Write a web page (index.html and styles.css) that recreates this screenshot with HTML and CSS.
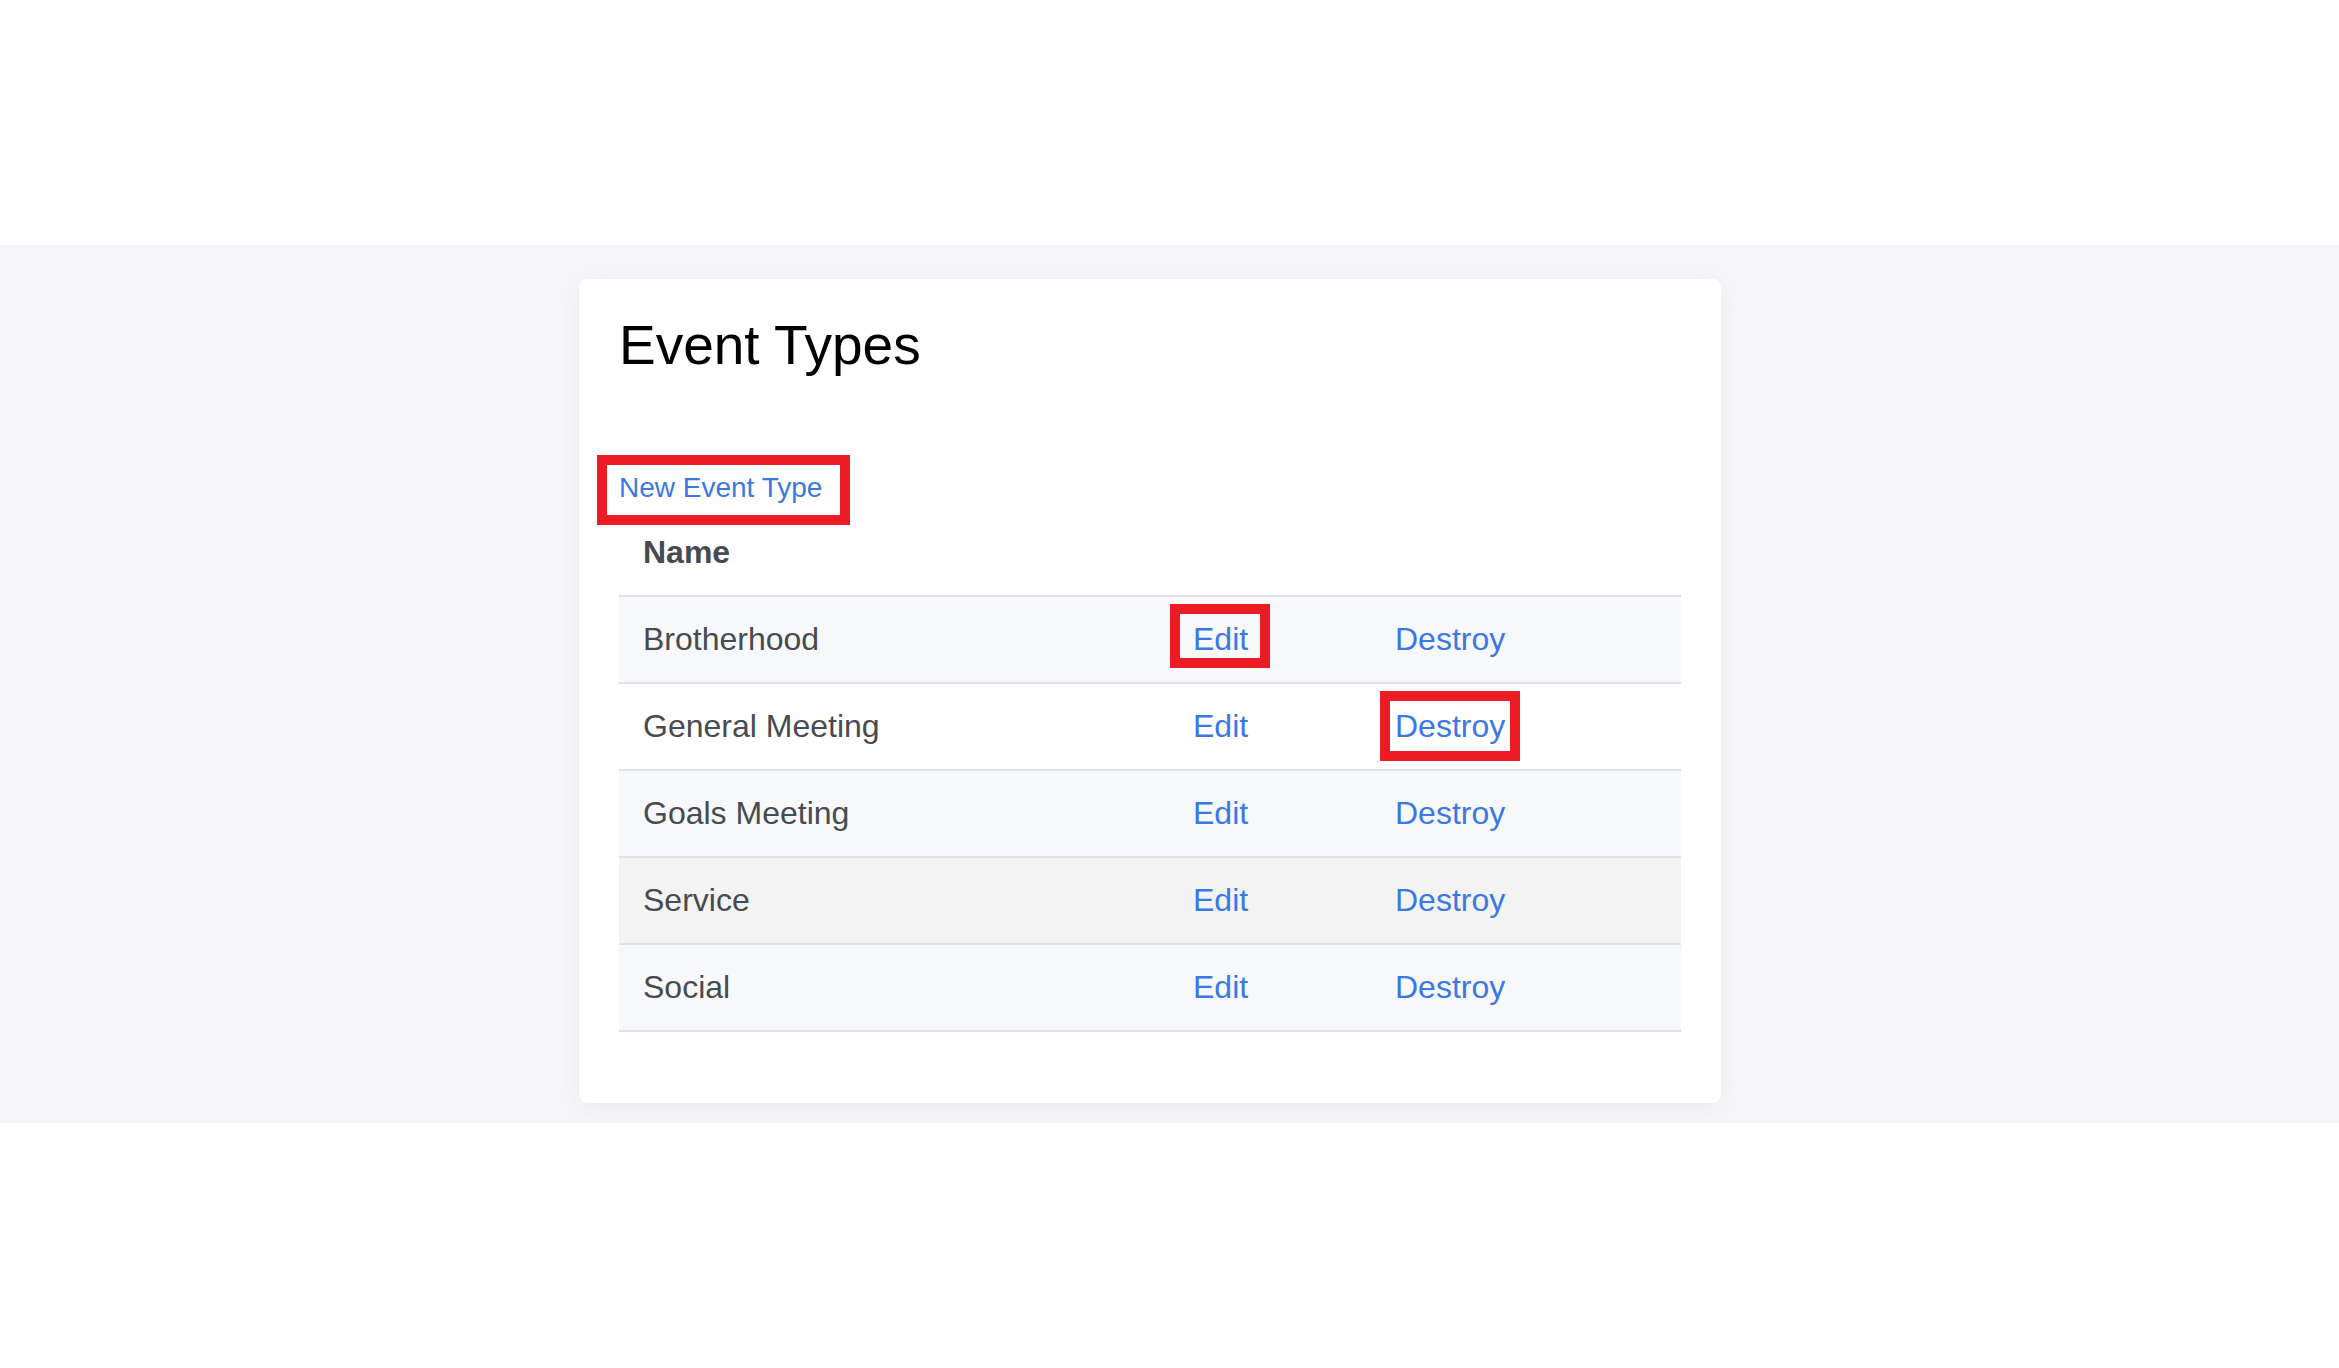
FILE: index.html
```html
<!DOCTYPE html>
<html lang="en">
<head>
<meta charset="utf-8">
<title>Event Types</title>
<link rel="stylesheet" href="styles.css">
</head>
<body>
<div class="topbar"></div>
<main class="band">
  <div class="container">
    <section class="card">
      <h1 class="title">Event Types</h1>
      <p class="new-line"><a class="link hl hl-new" href="#">New Event Type</a></p>
      <table class="table">
        <colgroup>
          <col class="col-name">
          <col class="col-edit">
          <col class="col-destroy">
        </colgroup>
        <thead>
          <tr><th>Name</th><th></th><th></th></tr>
        </thead>
        <tbody>
          <tr class="odd"><td>Brotherhood</td><td><a class="link hl hl-edit" href="#">Edit</a></td><td><a class="link" href="#">Destroy</a></td></tr>
          <tr><td>General Meeting</td><td><a class="link" href="#">Edit</a></td><td><a class="link hl hl-destroy" href="#">Destroy</a></td></tr>
          <tr class="odd"><td>Goals Meeting</td><td><a class="link" href="#">Edit</a></td><td><a class="link" href="#">Destroy</a></td></tr>
          <tr class="hover"><td>Service</td><td><a class="link" href="#">Edit</a></td><td><a class="link" href="#">Destroy</a></td></tr>
          <tr class="odd"><td>Social</td><td><a class="link" href="#">Edit</a></td><td><a class="link" href="#">Destroy</a></td></tr>
        </tbody>
      </table>
    </section>
  </div>
</main>
</body>
</html>
```

FILE: styles.css
```css
html, body {
  margin: 0;
  padding: 0;
  background: #ffffff;
  font-family: "Liberation Sans", Arial, sans-serif;
  color: #474b50;
}

.topbar {
  height: 245px;
  background: #ffffff;
}

.band {
  background: #f6f6fa;
  padding: 34px 0 20px;
}

.container {
  width: 1181px;
  margin: 0 auto;
}

.card {
  width: 1142px;
  box-sizing: border-box;
  background: #ffffff;
  border-radius: 8px;
  box-shadow: 0 4px 22px rgba(20, 20, 60, 0.06);
  padding: 33px 40px 71px;
}

.title {
  margin: 0 0 89px;
  font-size: 55px;
  line-height: 66px;
  font-weight: 400;
  color: #000000;
}

.new-line {
  margin: 0 0 1px;
  font-size: 28px;
  line-height: 42px;
  height: 42px;
}

.link {
  color: #3b78e4;
  text-decoration: none;
}

.hl {
  position: relative;
  display: inline-block;
}

.hl::after {
  content: "";
  position: absolute;
  border: 10px solid #ed1c24;
}

.hl-new::after {
  top: -12px;
  bottom: -16px;
  left: -22px;
  right: -28px;
}

.hl-edit::after {
  top: -11px;
  bottom: -5px;
  left: -23px;
  right: -22px;
}

.hl-destroy::after {
  top: -11px;
  bottom: -11px;
  left: -15px;
  right: -15px;
}

.table {
  width: 1062px;
  border-collapse: separate;
  border-spacing: 0;
  table-layout: fixed;
  font-size: 32px;
  line-height: 48px;
}

.col-name { width: 550px; }
.col-edit { width: 202px; }
.col-destroy { width: 310px; }

.table th,
.table td {
  text-align: left;
  padding: 18px 24px 19px;
  border-bottom: 2px solid #dfe1e6;
  white-space: nowrap;
}

.table th {
  font-weight: 700;
}

.table tr.odd td {
  background: #f7f8fa;
}

.table tr.hover td {
  background: #f3f3f4;
}
```
